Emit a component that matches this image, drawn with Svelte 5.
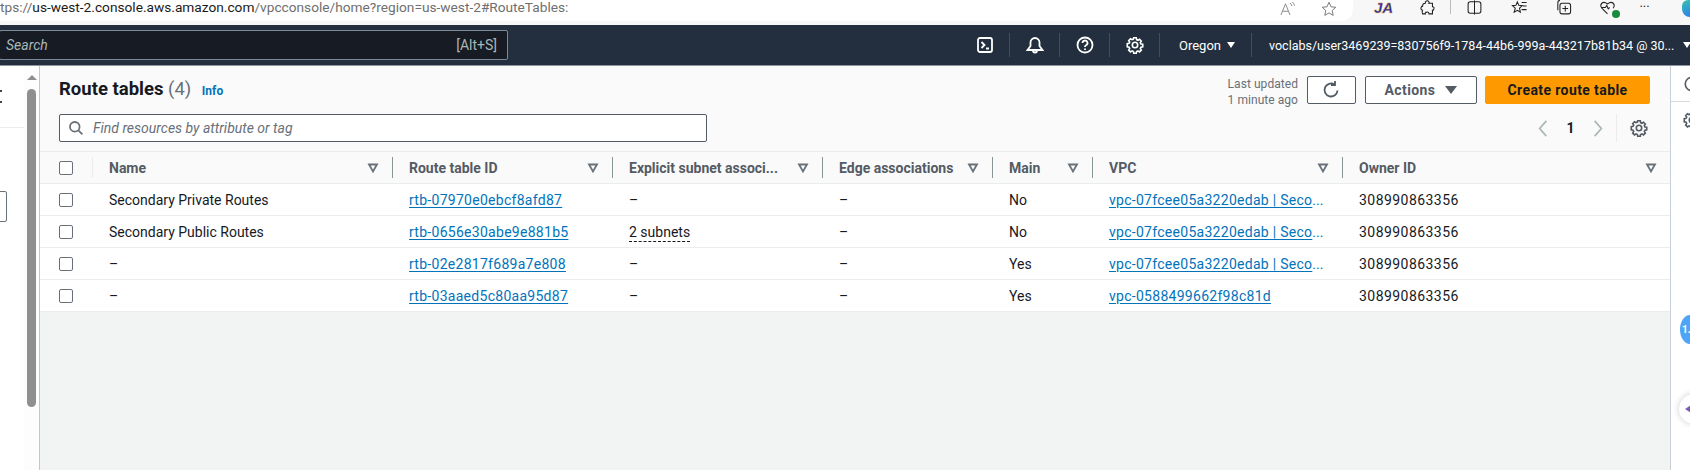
<script>
  const cols = [
    { label: 'Name', w: 300 },
    { label: 'Route table ID', w: 220 },
    { label: 'Explicit subnet associ...', w: 210 },
    { label: 'Edge associations', w: 170 },
    { label: 'Main', w: 100 },
    { label: 'VPC', w: 250 },
    { label: 'Owner ID', w: 328 }
  ];
  const vpcA = 'vpc-07fcee05a3220edab | Seco';
  const rows = [
    { name: 'Secondary Private Routes', id: 'rtb-07970e0ebcf8afd87', sub: '–', main: 'No', vpc: vpcA, more: true },
    { name: 'Secondary Public Routes', id: 'rtb-0656e30abe9e881b5', sub: '2 subnets', main: 'No', vpc: vpcA, more: true },
    { name: '–', id: 'rtb-02e2817f689a7e808', sub: '–', main: 'Yes', vpc: vpcA, more: true },
    { name: '–', id: 'rtb-03aaed5c80aa95d87', sub: '–', main: 'Yes', vpc: 'vpc-0588499662f98c81d', more: false }
  ];
  const gear = 'M8.600 2h2.800l.4 2 1.500.7 1.700-1.100 2 2-1.100 1.700.7 1.500 2 .4v2.800l-2 .4-.7 1.500 1.100 1.700-2 2-1.700-1.100-1.500.7-.4 2H8.600l-.4-2-1.500-.7-1.700 1.100-2-2 1.100-1.700-.7-1.500-2-.4V8.600l2-.4.7-1.500-1.100-1.700 2-2 1.700 1.100 1.500-.7z';
</script>

<div class="page">
  <header class="browser">
    <div class="url">
      <div class="addr">tps://<span class="dark">us-west-2.console.aws.amazon.com</span>/vpcconsole/home?region=us-west-2#RouteTables:</div>
      <svg class="bi" viewBox="0 0 24 24"><path d="M4 20 10 5l6 15M6.500 15h7" /><path d="M16 4q2 1.500 2.500 4M19 2.500q2.500 2 3 5" /></svg>
      <svg class="bi star" viewBox="0 0 24 24"><path d="m12 3 2.700 6 6.300.7-4.700 4.300 1.300 6.500-5.600-3.300-5.600 3.300 1.300-6.500L3 9.700 9.300 9z" /></svg>
    </div>
    <div class="tools">
      <span class="ja">JA</span>
      <svg class="bd ext" viewBox="0 0 24 24"><path d="M9 4q3-3 5 0 1 1 0 2h5v5q3 0 2 3t-2 2v5h-5q0-3-3-2.500T9 21H5q-1-3 0-5-3-1-2-4t2-2q0-4 4-4z" /></svg>
      <i class="tsep"></i>
      <svg class="bd split" viewBox="0 0 24 24"><rect x="3" y="4" width="18" height="16" rx="3" /><path d="M12 2v20" /></svg>
      <svg class="bd fav" viewBox="0 0 24 24"><path d="m9 4 2 5 5 .5-4 3.500 1.200 5.500L9 16l-4.500 2.500L6 13 2 9.500 7 9zM15 5h7M17 10h5M15 15h7" /></svg>
      <svg class="bd coll" viewBox="0 0 24 24"><path d="M4 16V5q0-3 3-3" /><rect x="7" y="6" width="15" height="15" rx="3" /><path d="M14.500 9.500v8M10.500 13.500h8" /></svg>
      <span class="heart">
        <svg class="bd" viewBox="0 0 24 24"><path d="M12 21 4 13q-3-4 0-7t8 1q5-4 8-1t0 7M4 12h5l2-3 2 5 2-2" /></svg>
        <i class="ok"></i>
      </span>
      <span class="dots">•••</span>
    </div>
    <i class="copilot"></i>
  </header>

  <nav class="nav">
    <div class="search">
      <span class="s-text">Search</span>
      <span class="s-key">[Alt+S]</span>
    </div>
    <div class="nav-right">
      <span class="ni"><svg viewBox="0 0 20 20"><rect x="3" y="3" width="14" height="14" rx="2" /><path d="m6.500 7 3 3-3 3M11 13.500h3" /></svg></span>
      <span class="ni"><svg viewBox="0 0 20 20"><path d="M2.500 15h15l-3-4V7.500a4.500 4.500 0 0 0-9 0V11zM8 15.500a2 2 0 0 0 4 0" /></svg></span>
      <span class="ni"><svg viewBox="0 0 20 20"><circle cx="10" cy="10" r="7.500" /><path d="M7.500 8a2.500 2.500 0 1 1 3.500 2.300q-1 .5-1 1.700M10 13.500v1.500" /></svg></span>
      <span class="ni"><svg class="ngear" viewBox="0 0 20 20"><path d={gear} /><circle cx="10" cy="10" r="3" /></svg></span>
      <span class="ni region">Oregon <i class="caret"></i></span>
      <span class="user">voclabs/user3469239=830756f9-1784-44b6-999a-443217b81b34 @ 30...</span>
      <i class="caret end"></i>
    </div>
  </nav>

  <div class="body">
    <aside class="side">
      <div class="side-top"><i class="dot"></i><i class="dot"></i></div>
      <div class="side-box"></div>
    </aside>
    <div class="scroll">
      <i class="up"></i>
      <i class="thumb"></i>
    </div>

    <main class="main">
      <section class="panel">
        <div class="head">
          <h1>Route tables <span class="count">(4)</span> <a class="info" href="#top">Info</a></h1>
          <div class="actions">
            <div class="updated">Last updated<br />1 minute ago</div>
            <button class="btn refresh" aria-label="Refresh">
              <svg viewBox="0 0 20 20"><path d="M15.500 10.500a6.500 6.500 0 1 1-3-6M13 1v4h-4" /></svg>
            </button>
            <button class="btn act">Actions <i class="caret dark"></i></button>
            <button class="btn primary">Create route table</button>
          </div>
        </div>
        <div class="filter">
          <div class="find">
            <svg viewBox="0 0 20 20"><circle cx="8.500" cy="8.500" r="6" /><path d="m13 13 5 5" /></svg>
            <span>Find resources by attribute or tag</span>
          </div>
          <div class="pager">
            <svg class="chev" viewBox="0 0 12 20"><path d="M9.500 2 2.500 10l7 8" /></svg>
            <span class="pg">1</span>
            <svg class="chev" viewBox="0 0 12 20"><path d="m2.500 2 7 8-7 8" /></svg>
            <i class="psep"></i>
            <svg class="pgear" viewBox="0 0 20 20"><path d={gear} /><circle cx="10" cy="10" r="3" /></svg>
          </div>
        </div>
      </section>

      <table>
        <thead>
          <tr>
            <th class="chk"><i class="box"></i></th>
            {#each cols as c}
              <th style="width: {c.w}px">
                <div class="th">
                  <span>{c.label}</span>
                  <svg viewBox="0 0 12 12"><path d="M2 2.500h8L6 9.500z" /></svg>
                </div>
              </th>
            {/each}
          </tr>
        </thead>
        <tbody>
          {#each rows as r}
            <tr>
              <td class="chk"><i class="box"></i></td>
              <td>{r.name}</td>
              <td><a href="#top">{r.id}</a></td>
              <td>{#if r.sub === '–'}–{:else}<span class="dashed">{r.sub}</span>{/if}</td>
              <td>–</td>
              <td>{r.main}</td>
              <td class="vpc"><a href="#top">{r.vpc}</a>{#if r.more}<span class="link">...</span>{/if}</td>
              <td class="owner">308990863356</td>
            </tr>
          {/each}
        </tbody>
      </table>
    </main>

    <aside class="rail">
      <div class="rail-top"><svg viewBox="0 0 20 20"><circle cx="10" cy="10" r="7.500" /><path d="M10 9v5M10 6v1.500" /></svg></div>
      <div class="rail-next"><svg viewBox="0 0 20 20"><path d={gear} /><circle cx="10" cy="10" r="3" /></svg></div>
      <div class="bubble">1.</div>
      <div class="float"><i></i></div>
    </aside>
  </div>
</div>

<style>
  :global(body) { margin: 0; }
  .page {
    width: 1690px; height: 470px; overflow: hidden; display: flex; flex-direction: column;
    font-family: Roboto, "Liberation Sans", sans-serif; font-size: 14px; color: #16191f; background: #fff;
  }
  i { display: block; font-style: normal; }

  .browser { height: 25px; flex: none; display: flex; background: #f7f7f7; overflow: hidden; position: relative; }
  .url {
    width: 1353px; height: 21px; flex: none; background: #fff; border-bottom-right-radius: 12px;
    display: flex; align-items: center;
  }
  .addr { flex: 1; color: #6f6f6f; font-size: 13.700px; line-height: 15px; white-space: nowrap; margin-top: -6px; }
  .dark { color: #1a1a1a; }
  svg { display: block; fill: none; }
  .bi { width: 18px; height: 18px; stroke: #8a8a8a; stroke-width: 1.300; margin-top: -4px; }
  .bi.star { margin: -4px 15px 0 24px; stroke: #777; }
  .tools { flex: 1; display: flex; align-items: center; height: 14px; }
  .bd { width: 17px; height: 17px; stroke: #222; stroke-width: 1.500; flex: none; }
  .ja { font: italic bold 15px "Liberation Sans", sans-serif; color: #2a2aa8; -webkit-text-stroke: .4px #d8a020; margin-left: 21px; width: 21px; }
  .ext { margin-left: 24px; }
  .tsep { width: 1px; height: 14px; background: #bbb; margin-left: 14px; }
  .split { margin-left: 15px; }
  .fav { margin-left: 28px; }
  .coll { margin-left: 27px; }
  .heart { margin-left: 27px; position: relative; display: block; }
  .ok { position: absolute; right: -4px; bottom: -2px; width: 8px; height: 8px; border-radius: 50%; background: #1a8a3c; }
  .dots { margin-left: 24px; font-size: 7px; letter-spacing: 1px; color: #222; width: 20px; }
  .copilot { position: absolute; left: 1682px; top: 0; width: 8px; height: 17px; border-radius: 6px 0 0 8px; background: linear-gradient(160deg, #35c2b0, #2f7fe8); }

  .nav {
    height: 41px; flex: none; background: #232f3e; border-bottom: 1px solid #8d949c; box-sizing: border-box;
    display: flex; align-items: center; justify-content: space-between;
  }
  .search {
    width: 509px; height: 30px; box-sizing: border-box; margin-left: -1px; padding: 0 10px 0 6px;
    background: #161b24; border: 1px solid #7d8998; border-radius: 2px;
    display: flex; align-items: center; justify-content: space-between;
  }
  .s-text { font-style: italic; color: #aab7b8; }
  .s-key { color: #aab7b8; }
  .nav-right { display: flex; align-items: center; height: 24px; color: #fff; }
  .ni { display: flex; align-items: center; justify-content: center; width: 50px; height: 24px; border-right: 1px solid #414d5c; box-sizing: border-box; }
  .ni svg { width: 20px; height: 20px; stroke: #fff; stroke-width: 1.800; }
  .ni svg.ngear { width: 18px; height: 18px; }
  .region { width: 92px; gap: 6px; padding-left: 3px; font-size: 13px; }
  .user { padding-left: 17px; font-size: 12.500px; white-space: nowrap; width: 435px; box-sizing: border-box; }
  .caret { width: 0; height: 0; border-left: 4.500px solid transparent; border-right: 4.500px solid transparent; border-top: 6.500px solid #fff; }
  .caret.dark { border-top-color: #545b64; border-left-width: 6px; border-right-width: 6px; border-top-width: 8px; }
  .caret.end { flex: none; margin-right: -1px; margin-left: -4px; }

  .body { flex: 1; min-height: 0; display: flex; }
  .side { width: 24px; flex: none; background: #fff; overflow: hidden; }
  .side-top { height: 62px; padding: 0; border-bottom: 1px solid #eaeded; box-sizing: border-box; display: flex; flex-direction: column; }
  .dot { width: 2px; height: 2px; background: #444; margin-top: 9px; }
  .dot:first-child { margin-top: 24px; }
  .side-box { width: 24px; height: 31px; margin: 63px 0 0 -17px; border: 1px solid #687078; border-radius: 2px; box-sizing: border-box; }
  .scroll {
    width: 15px; flex: none; background: #fdfdfd; border-right: 1px solid #c6c6c6;
    display: flex; flex-direction: column; align-items: center;
  }
  .up { width: 0; height: 0; margin-top: 9px; border-left: 5px solid transparent; border-right: 5px solid transparent; border-bottom: 5px solid #8f8f8f; }
  .thumb { width: 9px; height: 318px; margin-top: 9px; border-radius: 5px; background: #8f8f8f; }

  .main { flex: 1; min-width: 0; background: #f2f3f3; }
  .panel { height: 86px; background: #fafafa; padding: 0 20px 0 19px; box-sizing: border-box; border-bottom: 1px solid #eaeded; }
  .head { height: 48px; display: flex; justify-content: space-between; padding-top: 10px; box-sizing: border-box; }
  h1 { margin: 0; font-size: 18.500px; line-height: 26px; font-weight: 700; color: #16191f; }
  .count { color: #687078; font-weight: 400; }
  .info { font-size: 12px; font-weight: 700; color: #0073bb; text-decoration: none; margin-left: 6px; }
  .actions { display: flex; align-items: flex-start; }
  .updated { font-size: 12px; line-height: 16px; color: #687078; text-align: right; margin-right: 9px; letter-spacing: .05px; }
  .btn {
    height: 28px; box-sizing: border-box; border: 1px solid #545b64; border-radius: 2px; background: #fff;
    font: 700 14px Roboto, sans-serif; letter-spacing: .4px; color: #545b64; display: flex; align-items: center; justify-content: center; padding: 0;
  }
  .refresh { width: 49px; }
  .refresh svg { width: 20px; height: 20px; stroke: #545b64; stroke-width: 1.800; }
  .act { width: 112px; margin-left: 9px; gap: 10px; }
  .primary { width: 165px; margin-left: 8px; background: #f90; border-color: #f90; color: #16191f; }
  .filter { display: flex; justify-content: space-between; align-items: flex-start; }
  .find {
    width: 648px; height: 28px; box-sizing: border-box; background: #fff; border: 1px solid #545b64; border-radius: 2px;
    display: flex; align-items: center; padding-left: 8px; gap: 9px; color: #687078; font-style: italic;
  }
  .find svg { width: 16px; height: 16px; stroke: #687078; stroke-width: 2.200; }
  .pager { display: flex; align-items: center; height: 28px; margin-right: 2px; }
  .chev { width: 12px; height: 19px; stroke: #aab7b8; stroke-width: 1.800; }
  .pg { width: 43px; text-align: center; font-weight: 700; color: #16191f; }
  .psep { width: 1px; height: 28px; background: #eaeded; margin-left: 12px; }
  .pgear { width: 18px; height: 18px; margin-left: 13px; stroke: #545b64; stroke-width: 1.800; }

  table { width: 1630px; border-collapse: collapse; table-layout: fixed; background: #fff; }
  th { height: 31px; padding: 1px 0 0; background: #fafafa; border-bottom: 1px solid #eaeded; box-sizing: border-box; text-align: left; position: relative; }
  th:not(.chk) > .th::before { content: ""; position: absolute; left: 0; top: 5px; bottom: 5px; width: 1px; background: #879596; }
  th:nth-child(2) > .th::before { background: #eaeded; }
  th.chk, td.chk { width: 52px; padding: 1px 0 0 19px; box-sizing: border-box; }
  .th { display: flex; justify-content: space-between; align-items: center; padding: 0 13px 0 17px; font-weight: 700; color: #545b64; white-space: nowrap; }
  .th svg { width: 12px; height: 12px; stroke: #687078; stroke-width: 1.800; flex: none; }
  td { height: 32px; padding: 1px 0 0 17px; box-sizing: border-box; border-bottom: 1px solid #eaeded; white-space: nowrap; overflow: hidden; }
  a { color: #0073bb; }
  td a { text-decoration: underline; text-underline-offset: 2px; letter-spacing: .28px; }
  .owner { letter-spacing: .45px; }
  .link { color: #0073bb; }
  .dashed { border-bottom: 1px dashed #16191f; padding-bottom: 1px; }
  .box { width: 14px; height: 14px; box-sizing: border-box; border: 1px solid #687078; border-radius: 2px; background: #fff; }

  .rail { width: 20px; flex: none; background: #fff; border-left: 1px solid #c9d0d6; box-sizing: border-box; position: relative; overflow: hidden; }
  .rail-top { height: 36px; border-bottom: 1px solid #d5dbdb; box-sizing: border-box; padding: 9px 0 0 12px; }
  .rail-next { padding: 9px 0 0 12px; }
  .rail svg { width: 18px; height: 18px; stroke: #545b64; stroke-width: 1.800; }
  .bubble {
    position: absolute; left: 9px; top: 249px; width: 10px; height: 29px; border-radius: 10px 0 0 10px / 14.500px 0 0 14.500px; background: #4ea4f7;
    color: #fff; font: 700 10px/29px Roboto, sans-serif; padding-left: 2px; box-sizing: border-box;
  }
  .float { position: absolute; left: 8px; top: 328px; width: 30px; height: 30px; border-radius: 50%; background: #fff; box-shadow: 0 0 6px rgba(0,0,0,.2); }
  .float i { width: 0; height: 0; margin: 11px 0 0 6px; border-top: 4px solid transparent; border-bottom: 4px solid transparent; border-right: 6px solid #7a5cb8; }
</style>
